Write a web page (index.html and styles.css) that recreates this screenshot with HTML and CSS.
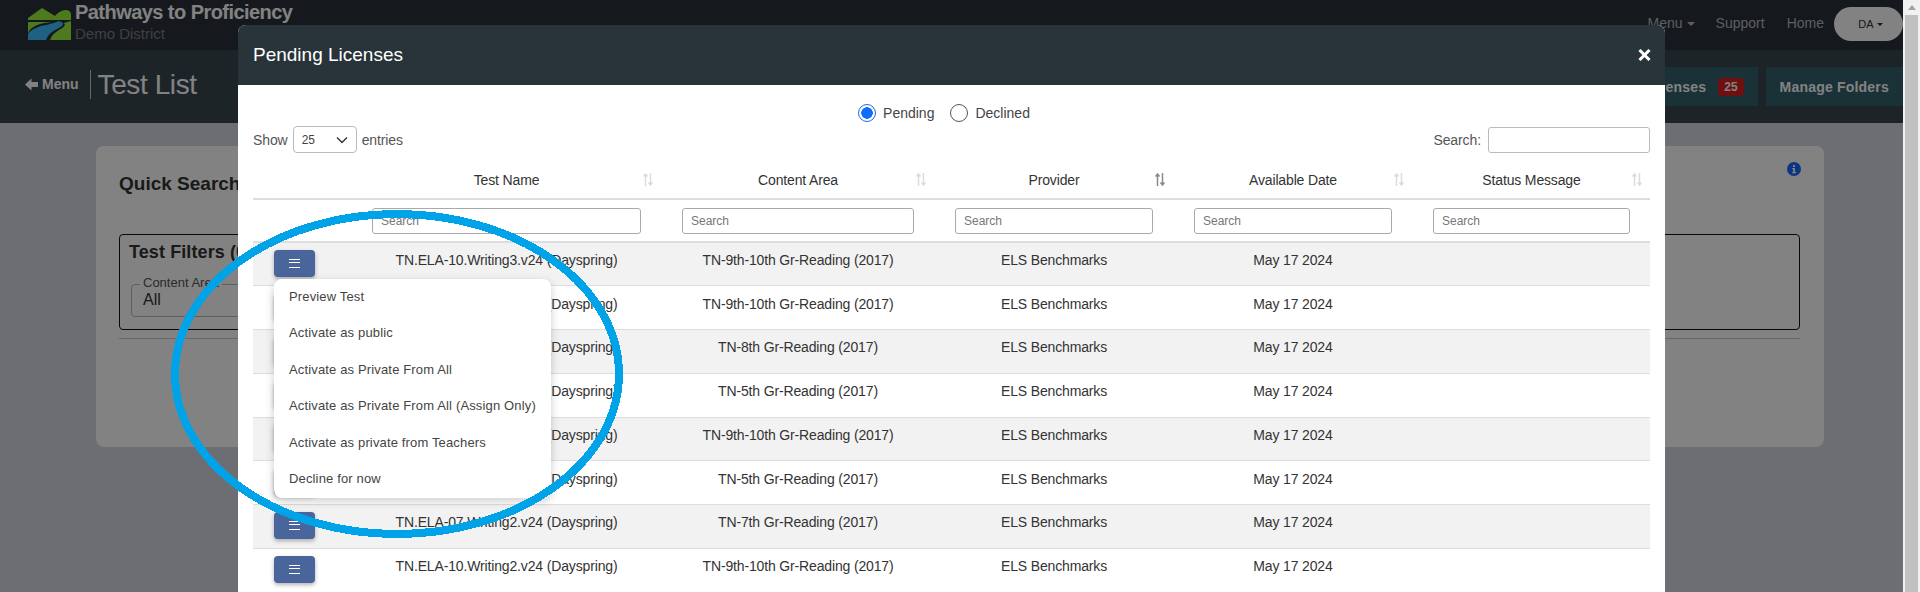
FILE: index.html
```html
<!DOCTYPE html>
<html lang="en">
<head>
<meta charset="utf-8">
<title>Test List</title>
<link rel="stylesheet" href="styles.css">
</head>
<body>
<svg class="defs" width="0" height="0" aria-hidden="true">
  <symbol id="sort-arrows" viewBox="0 0 10 13">
    <path class="arrow-up" d="M2.5 13V1M.5 3.5 2.5 1l2 2.5"/>
    <path class="arrow-down" d="M7.5 0v12M5.5 9.5l2 2.5 2-2.5"/>
  </symbol>
</svg>
<div class="window">
  <div class="page">
    <header class="topbar">
      <div class="brand">
        <svg class="logo" viewBox="0 0 43 32" width="43" height="32">
          <path d="M0 10 L14 0 L27 8 Q31 3 37 2 Q43 2 43 7 L43 12 L0 12Z" fill="#98f03c"/>
          <path d="M0 14 L24 14 Q10 15 4 20 Q1 22 0 25Z" fill="#98f03c"/>
          <path d="M43 13 L43 32 L22 32 Q24 26 31 22 Q39 18 36 15 Q39 14 43 13Z" fill="#98f03c"/>
          <path d="M0 32 L0 26 Q3 21 13 18 Q24 16 31 13 L35 15 Q36 18 27 22 Q20 26 18 32Z" fill="#3cbeff"/>
        </svg>
        <div class="brand-text">
          <div class="brand-name">Pathways to Proficiency</div>
          <div class="brand-sub">Demo District</div>
        </div>
      </div>
      <nav class="topnav">
        <span class="nav-link nav-menu">Menu<i class="caret"></i></span>
        <span class="nav-link nav-support">Support</span>
        <span class="nav-link">Home</span>
        <span class="user-pill">DA<i class="caret"></i></span>
      </nav>
    </header>
    <div class="subbar">
      <div class="subbar-left">
        <span class="back-link">
          <svg class="back-arrow" viewBox="0 0 13 13" width="13" height="13"><path d="M0 6.5 L6.5 0.5 L6.5 4 L13 4 L13 9 L6.5 9 L6.5 12.5Z" fill="#fff"/></svg>Menu</span>
        <h1 class="page-title">Test List</h1>
      </div>
      <div class="subbar-right">
        <span class="action-btn">Pending Licenses<b class="count">25</b></span>
        <span class="action-btn">Manage Folders</span>
      </div>
    </div>
    <main class="content">
      <section class="card">
        <div class="card-head">
          <h2 class="card-title">Quick Search</h2>
          <svg class="info" viewBox="0 0 14 14" width="14" height="14"><circle cx="7" cy="7" r="7" fill="#1a6aff"/><rect x="6" y="3" width="2" height="2" fill="#fff"/><path d="M5.2 6h2.8v4h1v1.2H5.2V10h1V7.2h-1z" fill="#fff"/></svg>
        </div>
        <div class="filters">
          <h3 class="filters-title">Test Filters (0)</h3>
          <div class="outlined">
            <span class="outlined-label">Content Area</span>
            <span class="outlined-value">All</span>
          </div>
        </div>
        <hr class="card-rule">
      </section>
    </main>
    <div class="backdrop"></div>

    <div class="modal">
      <div class="modal-head">
        <h4 class="modal-title">Pending Licenses</h4>
        <svg class="close" viewBox="0 0 13 12" width="13" height="12"><path d="M1.5 1 L11.5 11 M11.5 1 L1.5 11" stroke="#fff" stroke-width="3" fill="none"/></svg>
      </div>
      <div class="modal-body">
        <div class="radios">
          <label class="radio"><i class="dot on"></i>Pending</label>
          <label class="radio"><i class="dot"></i>Declined</label>
        </div>
        <div class="tools">
          <div class="length">Show <span class="select">25<svg viewBox="0 0 12 8" width="12" height="8"><path d="M1 1.5 L6 6.5 L11 1.5" fill="none" stroke="#333" stroke-width="1.4"/></svg></span> entries</div>
          <div class="search">Search: <span class="search-input"></span></div>
        </div>
        <table class="grid">
          <colgroup>
            <col class="c0"><col class="c1"><col class="c2"><col class="c3"><col class="c4"><col class="c5">
          </colgroup>
          <thead>
            <tr class="head-row">
              <th></th>
              <th>Test Name<svg class="sort-icon"><use href="#sort-arrows"/></svg></th>
              <th>Content Area<svg class="sort-icon"><use href="#sort-arrows"/></svg></th>
              <th>Provider<svg class="sort-icon asc"><use href="#sort-arrows"/></svg></th>
              <th>Available Date<svg class="sort-icon"><use href="#sort-arrows"/></svg></th>
              <th>Status Message<svg class="sort-icon"><use href="#sort-arrows"/></svg></th>
            </tr>
            <tr class="filter-row">
              <th></th>
              <th><span class="field">Search</span></th>
              <th><span class="field">Search</span></th>
              <th><span class="field">Search</span></th>
              <th><span class="field">Search</span></th>
              <th><span class="field">Search</span></th>
            </tr>
          </thead>
          <tbody>
            <tr><td class="btn-cell"><span class="row-btn"><i></i></span></td><td>TN.ELA-10.Writing3.v24 (Dayspring)</td><td>TN-9th-10th Gr-Reading (2017)</td><td>ELS Benchmarks</td><td>May 17 2024</td><td></td></tr>
            <tr><td class="btn-cell"><span class="row-btn"><i></i></span></td><td>TN.ELA-09.Writing3.v24 (Dayspring)</td><td>TN-9th-10th Gr-Reading (2017)</td><td>ELS Benchmarks</td><td>May 17 2024</td><td></td></tr>
            <tr><td class="btn-cell"><span class="row-btn"><i></i></span></td><td>TN.ELA-08.Writing3.v24 (Dayspring)</td><td>TN-8th Gr-Reading (2017)</td><td>ELS Benchmarks</td><td>May 17 2024</td><td></td></tr>
            <tr><td class="btn-cell"><span class="row-btn"><i></i></span></td><td>TN.ELA-05.Writing3.v24 (Dayspring)</td><td>TN-5th Gr-Reading (2017)</td><td>ELS Benchmarks</td><td>May 17 2024</td><td></td></tr>
            <tr><td class="btn-cell"><span class="row-btn"><i></i></span></td><td>TN.ELA-09.Writing2.v24 (Dayspring)</td><td>TN-9th-10th Gr-Reading (2017)</td><td>ELS Benchmarks</td><td>May 17 2024</td><td></td></tr>
            <tr><td class="btn-cell"><span class="row-btn"><i></i></span></td><td>TN.ELA-05.Writing2.v24 (Dayspring)</td><td>TN-5th Gr-Reading (2017)</td><td>ELS Benchmarks</td><td>May 17 2024</td><td></td></tr>
            <tr><td class="btn-cell"><span class="row-btn"><i></i></span></td><td>TN.ELA-07.Writing2.v24 (Dayspring)</td><td>TN-7th Gr-Reading (2017)</td><td>ELS Benchmarks</td><td>May 17 2024</td><td></td></tr>
            <tr><td class="btn-cell"><span class="row-btn"><i></i></span></td><td>TN.ELA-10.Writing2.v24 (Dayspring)</td><td>TN-9th-10th Gr-Reading (2017)</td><td>ELS Benchmarks</td><td>May 17 2024</td><td></td></tr>
          </tbody>
        </table>
      </div>
    </div>

    <ul class="menu">
      <li>Preview Test</li>
      <li>Activate as public</li>
      <li>Activate as Private From All</li>
      <li>Activate as Private From All (Assign Only)</li>
      <li>Activate as private from Teachers</li>
      <li>Decline for now</li>
    </ul>

    <svg class="annotation" viewBox="0 0 470 350" width="470" height="350" shape-rendering="crispEdges"><ellipse cx="235" cy="175" rx="222" ry="160" fill="none" stroke="#00a2e8" stroke-width="8"/></svg>
  </div>
  <div class="scrollbar">
    <span class="scroll-up"></span>
    <span class="scroll-thumb"></span>
  </div>
</div>
</body>
</html>
```
FILE: styles.css
```css
* { box-sizing: border-box; }
html, body { margin: 0; height: 592px; overflow: hidden; }
body { font-family: "Liberation Sans", Arial, sans-serif; font-size: 14px; color: #333; }
h1, h2, h3, h4 { margin: 0; }
.defs { position: absolute; }

.window { display: flex; height: 592px; }
.page { position: relative; flex: 1; min-width: 0; height: 592px; overflow: hidden; background: #d6d7e2; }

/* top bar */
.topbar { display: flex; justify-content: space-between; height: 50px; background: #2a3239; padding-left: 28px; }
.brand { display: flex; gap: 4px; padding-top: 8px; }
.logo { display: block; }
.brand-text { margin-top: -8px; }
.brand-name { font-size: 20px; font-weight: 700; line-height: 25px; letter-spacing: -.55px; color: #fff; }
.brand-sub { font-size: 15px; line-height: 17px; color: #7a8085; }
.topnav { display: flex; align-items: flex-start; }
.nav-link { color: #b4b9be; font-size: 14px; line-height: 17px; margin-top: 15px; margin-right: 20px; }
.nav-menu { margin-right: 21px; }
.nav-support { margin-right: 22px; }
.user-pill { width: 69px; height: 34px; margin-top: 7px; margin-left: -10px; background: #fff; border-radius: 17px; display: flex; align-items: center; justify-content: center; font-size: 11px; color: #333; padding-left: 4px; }
.caret { display: inline-block; margin-left: 4px; vertical-align: 2px; border-top: 4px solid currentColor; border-left: 4px solid transparent; border-right: 4px solid transparent; }
.user-pill .caret { border-width: 3px 3px 0; margin-left: 3px; }

/* sub bar */
.subbar { display: flex; justify-content: space-between; height: 73px; background: #38474f; padding-left: 25px; }
.subbar-left { display: flex; align-items: center; }
.back-link { display: flex; align-items: center; gap: 4px; font-size: 14px; font-weight: 700; color: #fff; margin-top: -5px; padding-right: 11px; }
.back-arrow { display: block; }
.page-title { font-size: 28px; font-weight: 400; line-height: 29px; height: 29px; letter-spacing: -.4px; color: #fff; padding-left: 7px; border-left: 1px solid #c9cdcf; margin-top: -5px; }
.subbar-right { display: flex; gap: 8px; padding-top: 17px; }
.action-btn { display: flex; align-items: center; gap: 12px; height: 39px; padding: 0 14px; background: #33606c; color: #fff; font-weight: 700; font-size: 14px; letter-spacing: .2px; }
.count { background: #d92020; border-radius: 4px; font-size: 12px; letter-spacing: 0; padding: 3px 6px; color: #fff; line-height: 12px; }

/* page content */
.content { padding: 23px 79px 0 96px; }
.card { height: 301px; background: #fff; border-radius: 8px; padding: 0 24px 0 23px; }
.card-head { display: flex; justify-content: space-between; height: 88px; }
.card-title { font-size: 19px; font-weight: 700; margin-top: 27px; color: #333; line-height: 22px; }
.info { margin-top: 16px; margin-right: -1px; }
.filters { height: 96px; border: 1px solid #111; border-radius: 4px; padding: 6px 9px 0; }
.filters-title { font-size: 18px; font-weight: 700; line-height: 22px; letter-spacing: .1px; color: #333; }
.outlined { position: relative; width: 300px; height: 33px; margin: 21px 0 0 2px; border: 1px solid #bbb; border-radius: 4px; padding: 5px 11px; }
.outlined-label { position: absolute; top: -9px; left: 8px; padding: 0 3px; background: #fff; font-size: 13px; line-height: 14px; color: #555; }
.outlined-value { font-size: 16px; line-height: 20px; color: #333; }
.card-rule { margin: 8px 0 0; border: 0; border-top: 1px solid #ccc; }

.backdrop { position: absolute; inset: 0; background: rgba(0,0,0,.49); }

/* modal */
.modal { position: absolute; top: 25px; left: 238px; width: 1427px; height: 600px; background: #fff; border-radius: 8px 8px 0 0; overflow: hidden; }
.modal-head { display: flex; justify-content: space-between; align-items: center; height: 60px; padding: 0 15px; background: #29333a; color: #fff; }
.modal-title { font-size: 19px; font-weight: 400; line-height: 24px; }
.close { display: block; margin-right: -1px; }
.modal-body { padding: 0 15px; }
.radios { display: flex; justify-content: center; gap: 16px; height: 42px; padding: 19px 15px 0 0; }
.radio { display: flex; align-items: center; height: 18px; gap: 7px; font-size: 14px; color: #444; }
.dot { display: block; width: 18px; height: 18px; border-radius: 50%; border: 1px solid #555; background: #fff; }
.dot.on { border-color: #2b66d9; background: radial-gradient(circle, #0d6efd 0 5.5px, #fff 6px); }
.tools { display: flex; justify-content: space-between; height: 44px; font-size: 14px; letter-spacing: -.1px; color: #555; }
.length, .search { display: flex; align-items: center; height: 27px; margin-top: -1px; gap: 4px; }
.length { gap: 5px; }
.select { display: flex; align-items: center; justify-content: space-between; width: 64px; height: 27px; border: 1px solid #bbb; border-radius: 4px; padding: 0 8px; font-size: 12px; color: #444; }
.search-input { display: block; width: 162px; height: 26px; border: 1px solid #bbb; border-radius: 3px; margin-left: 3px; }

/* table */
.grid { width: 1397px; border-collapse: collapse; table-layout: fixed; font-size: 14px; letter-spacing: -.15px; color: #333; }
.c0 { width: 98px; }
.c1 { width: 310px; }
.c2 { width: 273px; }
.c3 { width: 239px; }
.c4 { width: 239px; }
.c5 { width: 238px; }
.head-row th { height: 27px; padding: 1px 20px 10px 21px; font-weight: 400; text-align: center; border-bottom: 2px solid #ddd; position: relative; }
.sort-icon { --up: #dcdcdc; position: absolute; right: 8px; top: 2px; width: 10px; height: 13px; fill: none; stroke-width: 1.5; stroke: #dcdcdc; }
.sort-icon.asc { stroke: #8a8a8a; }
.filter-row th { height: 43px; padding: 0 20px 0 21px; font-weight: 400; border-bottom: 2px solid #ddd; }
.field { display: block; height: 26px; border: 1px solid #aaa; border-radius: 3px; padding: 0 8px; text-align: left; font-size: 12px; line-height: 24px; letter-spacing: 0; color: #777; }
tbody tr { height: 43.75px; }
tbody td { padding: 0 20px 8px 21px; text-align: center; border-bottom: 1px solid #ddd; }
tbody tr:nth-child(odd) td { background: #f2f2f2; }
td.btn-cell { padding: 0 0 2px 21px; text-align: left; }
.row-btn { display: flex; align-items: center; justify-content: center; width: 41px; height: 27px; background: #4a659c; border-radius: 4px; box-shadow: 0 2px 4px rgba(0,0,0,.3); }
.row-btn i { display: block; width: 11px; height: 9px; border-top: 1.5px solid #fff; border-bottom: 1.5px solid #fff; position: relative; }
.row-btn i::after { content: ""; position: absolute; left: 0; right: 0; top: 2.25px; border-top: 1.5px solid #fff; }

/* dropdown */
.menu { position: absolute; top: 279px; left: 274px; width: 277px; height: 219px; margin: 0; padding: 0; list-style: none; background: #fff; border-radius: 8px; box-shadow: 0 3px 10px rgba(0,0,0,.2); }
.menu li { height: 36.4px; padding-left: 15px; line-height: 36px; font-size: 13px; letter-spacing: .15px; color: #444; white-space: nowrap; }

.annotation { position: absolute; left: 162px; top: 199px; }

/* scrollbar */
.scrollbar { flex: 0 0 17px; background: #f1f1f1; position: relative; display: flex; flex-direction: column; align-items: center; }
.scroll-up { display: block; margin-top: 5px; border-bottom: 5px solid #a3a3a3; border-left: 4px solid transparent; border-right: 4px solid transparent; }
.scroll-thumb { display: block; width: 13px; margin-top: 5px; flex: 1; background: #c1c1c1; }
```
